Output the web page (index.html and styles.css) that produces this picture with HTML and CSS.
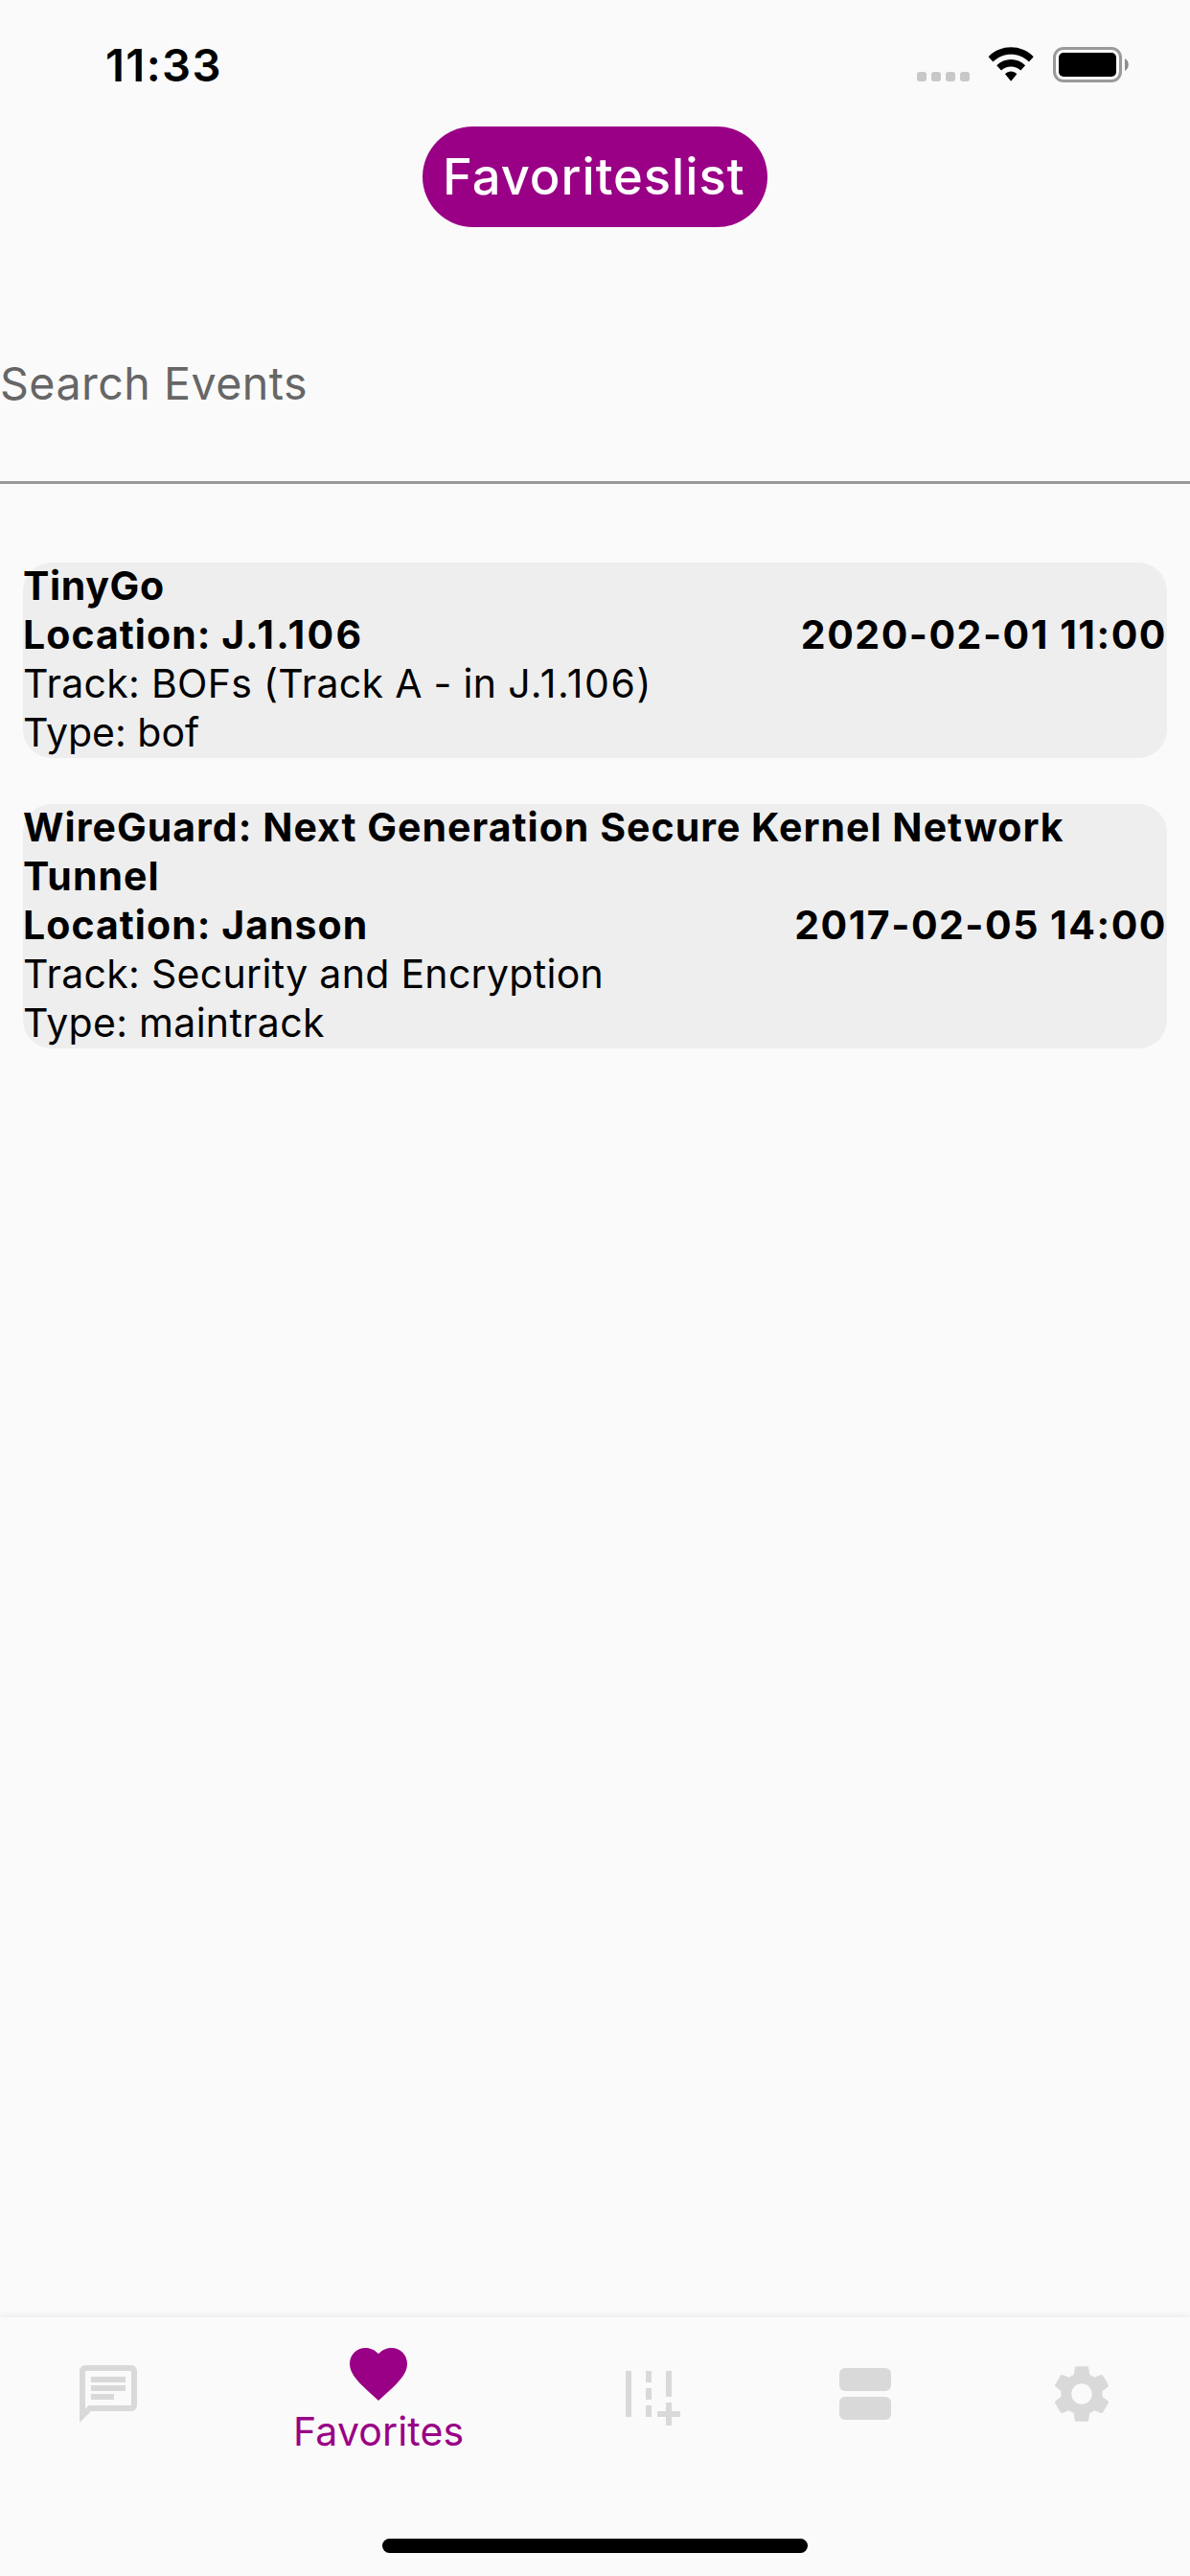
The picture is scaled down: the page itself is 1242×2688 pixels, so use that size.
FILE: index.html
```html
<!DOCTYPE html>
<html lang="en">
<head>
<meta charset="utf-8">
<title>Favoriteslist</title>
<link rel="stylesheet" href="styles.css">
</head>
<body>
<div class="screen">
  <header class="status-bar">
    <span class="clock">11:33</span>
    <div class="indicators">
      <svg class="signal" width="55" height="38" viewBox="0 0 55 38"><rect y="27" width="10" height="10" rx="3"/><rect x="15" y="27" width="10" height="10" rx="3"/><rect x="30" y="27" width="10" height="10" rx="3"/><rect x="45" y="27" width="10" height="10" rx="3"/></svg>
      <svg class="wifi" width="49" height="38" viewBox="0 0 49 38"><path d="M.6 11.2C13.5-2 34.8-2 47.7 11.2L43 16.5C32.6 6.1 15.7 6.1 5.4 16.5ZM9.2 20.3C17.5 12 30.8 12 39.1 20.3L34.3 25.6C28.7 20 19.6 20 14 25.6ZM18 29.2C21.4 25.7 26.9 25.7 30.3 29.2L24.2 36.8Z"/></svg>
      <svg class="battery" width="80" height="38" viewBox="0 0 80 38"><rect class="battery-shell" x="1.5" y="2.5" width="69" height="34" rx="9.5"/><rect x="6" y="7" width="60" height="25" rx="5"/><path class="battery-cap" d="M75 13C80 15.5 80 23.5 75 26Z"/></svg>
    </div>
  </header>

  <h1 class="page-title">Favoriteslist</h1>

  <div class="search"><span class="search-label">Search Events</span></div>

  <main class="events">
    <article class="event">
      <div class="event-body">
        <div class="event-name short">TinyGo</div>
        <div class="event-row"><span class="location">Location: <span class="room">J.1.106</span></span><span class="time">2020-02-01 11:00</span></div>
        <div class="track">Track: BOFs (Track A - in <span class="room">J.1.106)</span></div>
        <div class="type brief">Type: bof</div>
      </div>
    </article>
    <article class="event">
      <div class="event-body">
        <div class="event-name">WireGuard: Next Generation Secure Kernel Network Tunnel</div>
        <div class="event-row"><span class="location">Location: Janson</span><span class="time">2017-02-05 14:00</span></div>
        <div class="track">Track: Security and Encryption</div>
        <div class="type">Type: maintrack</div>
      </div>
    </article>
  </main>

  <footer class="bottom">
    <nav class="tabs">
      <div class="tab"><svg class="icon" viewBox="0 0 24 24"><path d="M4 4h16v12H5.17L4 17.17V4m0-2c-1.1 0-1.99.9-1.99 2L2 22l4-4h14c1.1 0 2-.9 2-2V4c0-1.1-.9-2-2-2H4zm2 10h8v2H6v-2zm0-3h12v2H6V9zm0-3h12v2H6V6z"/></svg></div>
      <div class="tab active"><svg class="icon" viewBox="0 0 24 24"><path d="M12 21.35l-1.45-1.32C5.4 15.36 2 12.28 2 8.5 2 5.42 4.42 3 7.5 3c1.74 0 3.41.81 4.5 2.09C13.09 3.81 14.76 3 16.5 3 19.58 3 22 5.42 22 8.5c0 3.78-3.4 6.86-8.55 11.54L12 21.35z"/></svg><span class="tab-label">Favorites</span></div>
      <div class="tab"><svg class="icon" viewBox="0 0 24 24"><path d="M20 18v-3h-2v3h-3v2h3v3h2v-3h3v-2zM20 4h-2v9h2zM6 4H4v16h2zM13 4h-2v4h2zM13 10h-2v4h2zM13 16h-2v4h2z"/></svg></div>
      <div class="tab"><svg class="icon" viewBox="0 0 24 24"><rect x="3" y="3" width="18" height="8" rx="2"/><rect x="3" y="13" width="18" height="8" rx="2"/></svg></div>
      <div class="tab"><svg class="icon" viewBox="0 0 24 24"><path d="M19.14 12.94c.04-.3.06-.61.06-.94 0-.32-.02-.64-.07-.94l2.03-1.58c.18-.14.23-.41.12-.61l-1.92-3.32c-.12-.22-.37-.29-.59-.22l-2.39.96c-.5-.38-1.03-.7-1.62-.94l-.36-2.54c-.04-.24-.24-.41-.48-.41h-3.84c-.24 0-.43.17-.47.41l-.36 2.54c-.59.24-1.13.57-1.62.94l-2.39-.96c-.22-.08-.47 0-.59.22L2.74 8.87c-.12.21-.08.47.12.61l2.03 1.58c-.05.3-.09.63-.09.94s.02.64.07.94l-2.03 1.58c-.18.14-.23.41-.12.61l1.92 3.32c.12.22.37.29.59.22l2.39-.96c.5.38 1.03.7 1.62.94l.36 2.54c.05.24.24.41.48.41h3.84c.24 0 .44-.17.47-.41l.36-2.54c.59-.24 1.13-.56 1.62-.94l2.39.96c.22.08.47 0 .59-.22l1.92-3.32c.12-.22.07-.47-.12-.61l-2.01-1.58zM12 15.6c-1.98 0-3.6-1.62-3.6-3.6s1.62-3.6 3.6-3.6 3.6 1.62 3.6 3.6-1.62 3.6-3.6 3.6z"/></svg></div>
    </nav>
    <div class="home-indicator"></div>
  </footer>
</div>
</body>
</html>
```
FILE: styles.css
```css
* {
  box-sizing: border-box;
}

body {
  margin: 0;
  background: #fafafa;
  color: #000;
  font-family: Inter, "Liberation Sans", sans-serif;
}

.screen {
  display: flex;
  flex-direction: column;
  width: 1242px;
  height: 2688px;
  overflow: hidden;
}

.status-bar {
  display: flex;
  justify-content: space-between;
  height: 132px;
  padding: 0 63px 0 110px;
}

.clock {
  padding-top: 38px;
  font-size: 47.2px;
  font-weight: 600;
  line-height: 60px;
  letter-spacing: 1.38px;
}

.indicators {
  display: flex;
  padding-top: 48px;
}

.wifi {
  margin: 0 19px;
}

.signal {
  fill: #c8c8c8;
}

.battery-shell {
  fill: none;
  stroke: #999;
  stroke-width: 3;
}

.battery-cap {
  fill: #8c8c8c;
}

.page-title {
  align-self: center;
  width: 360px;
  height: 105px;
  margin: 0;
  padding: 20px 0 0 21px;
  border-radius: 52.5px;
  background: #990085;
  color: #fff;
  font-size: 52.5px;
  font-weight: 500;
  line-height: 64px;
  letter-spacing: 0.97px;
  white-space: nowrap;
}

.search {
  height: 268px;
  padding-top: 133px;
  border-bottom: 3px solid #999;
}

.search-label {
  display: block;
  color: #666;
  font-size: 46.6px;
  line-height: 60px;
  letter-spacing: 0.46px;
}

.events {
  display: flex;
  flex: 1;
  flex-direction: column;
  gap: 48px;
  padding: 82px 24px 0;
}

.event {
  border-radius: 30px;
  background: #eee;
}

.event-body {
  margin: -1px 0 1px;
  font-size: 41px;
  line-height: 51px;
  letter-spacing: 0.3px;
}

.event-name,
.event-row {
  font-weight: 700;
  letter-spacing: 1.03px;
}

.event-name.short {
  letter-spacing: 0.65px;
}

.event-row {
  display: flex;
  justify-content: space-between;
}

.location .room {
  letter-spacing: 2.3px;
}

.time {
  letter-spacing: 1.5px;
}

.track .room {
  letter-spacing: 1.6px;
}

.type.brief {
  letter-spacing: 0;
}

.bottom {
  display: flex;
  flex-direction: column;
  align-items: center;
  height: 270px;
  box-shadow: 0 -1px 8px rgba(0, 0, 0, 0.08);
  background: #fafafa;
}

.tabs {
  display: flex;
  width: 100%;
  height: 231px;
}

.tab {
  display: flex;
  flex: 1 1 0;
  flex-direction: column;
  align-items: center;
  padding-top: 44px;
  color: #d9d9d9;
}

.tab.active {
  flex-grow: 1.5;
  padding-top: 23px;
  color: #990085;
}

.icon {
  width: 72px;
  height: 72px;
  fill: currentColor;
}

.tab-label {
  font-size: 41px;
  line-height: 48px;
  letter-spacing: 0.15px;
}

.home-indicator {
  width: 444px;
  height: 15px;
  border-radius: 7.5px;
  background: #000;
}
```
